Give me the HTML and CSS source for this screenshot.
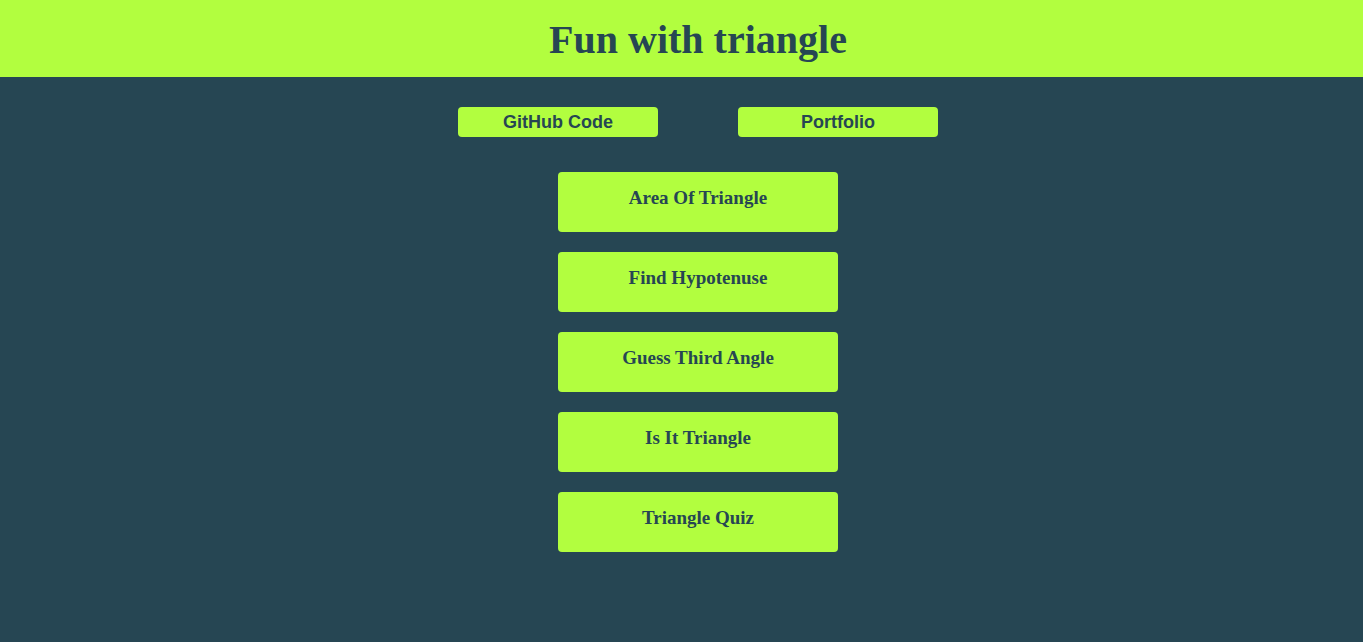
FILE: index.html
```html
<!DOCTYPE html>
<html>
<head>
<meta charset="utf-8">
<link rel="stylesheet" href="styles.css">
<title>Fun with triangle</title>
</head>
<body>
<header class="top">
  <h1 class="title">Fun with triangle</h1>
</header>
<main class="main">
  <nav class="links">
    <a class="link-btn" href="#">GitHub Code</a>
    <a class="link-btn" href="#">Portfolio</a>
  </nav>
  <div class="menu">
    <a class="menu-btn" href="#"><h3 class="menu-label">Area Of Triangle</h3></a>
    <a class="menu-btn" href="#"><h3 class="menu-label">Find Hypotenuse</h3></a>
    <a class="menu-btn" href="#"><h3 class="menu-label">Guess Third Angle</h3></a>
    <a class="menu-btn" href="#"><h3 class="menu-label">Is It Triangle</h3></a>
    <a class="menu-btn" href="#"><h3 class="menu-label">Triangle Quiz</h3></a>
  </div>
</main>
</body>
</html>
```
FILE: styles.css
```css
html, body {
  margin: 0;
  padding: 0;
  height: 100%;
}
body {
  background: #264653;
  color: #264653;
  font-family: "Liberation Serif", "Times New Roman", serif;
}
.top {
  background: #b2fe3f;
  height: 77px;
  display: flex;
  justify-content: center;
  align-items: center;
  padding-left: 33px;
}
.title {
  margin: 0;
  font-size: 40px;
  font-weight: bold;
  line-height: 1;
  padding-top: 3px;
}
.main {
  padding-left: 33px;
  display: flex;
  flex-direction: column;
  align-items: center;
}
.links {
  display: flex;
  gap: 80px;
  margin-top: 30px;
}
.link-btn {
  display: flex;
  justify-content: center;
  align-items: center;
  width: 200px;
  height: 30px;
  background: #b2fe3f;
  border-radius: 4px;
  color: #264653;
  text-decoration: none;
  font-family: "Liberation Sans", Arial, sans-serif;
  font-weight: bold;
  font-size: 18px;
}
.menu {
  display: flex;
  flex-direction: column;
  gap: 20px;
  margin-top: 35px;
}
.menu-btn {
  display: block;
  box-sizing: border-box;
  width: 280px;
  height: 60px;
  background: #b2fe3f;
  border-radius: 4px;
  color: #264653;
  text-decoration: none;
  text-align: center;
  padding-top: 15px;
}
.menu-label {
  margin: 0;
  font-size: 19px;
  font-weight: bold;
  line-height: normal;
}
```
